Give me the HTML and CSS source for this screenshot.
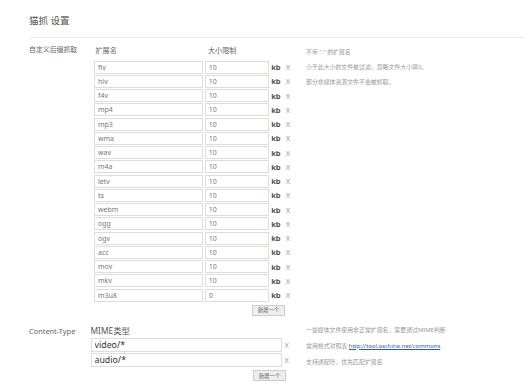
FILE: index.html
```
<html>
  <head>
    <meta charset="UTF-8">
    <title>猫抓 设置</title>
    <link rel="stylesheet" href="styles.css">
  </head>
  <body>
    <div class="page">
      <h1 class="title">猫抓 设置</h1>

      <div class="group ext-group">
        <div class="label">自定义后缀抓取</div>
        <div class="editor">
          <div class="head"><span class="col-ext">扩展名</span><span class="col-size">大小限制</span></div>
          <div class="row"><input class="ext" value="flv"><input class="size" value="10"><span class="unit">kb</span><span class="del">X</span></div>
          <div class="row"><input class="ext" value="hlv"><input class="size" value="10"><span class="unit">kb</span><span class="del">X</span></div>
          <div class="row"><input class="ext" value="f4v"><input class="size" value="10"><span class="unit">kb</span><span class="del">X</span></div>
          <div class="row"><input class="ext" value="mp4"><input class="size" value="10"><span class="unit">kb</span><span class="del">X</span></div>
          <div class="row"><input class="ext" value="mp3"><input class="size" value="10"><span class="unit">kb</span><span class="del">X</span></div>
          <div class="row"><input class="ext" value="wma"><input class="size" value="10"><span class="unit">kb</span><span class="del">X</span></div>
          <div class="row"><input class="ext" value="wav"><input class="size" value="10"><span class="unit">kb</span><span class="del">X</span></div>
          <div class="row"><input class="ext" value="m4a"><input class="size" value="10"><span class="unit">kb</span><span class="del">X</span></div>
          <div class="row"><input class="ext" value="letv"><input class="size" value="10"><span class="unit">kb</span><span class="del">X</span></div>
          <div class="row"><input class="ext" value="ts"><input class="size" value="10"><span class="unit">kb</span><span class="del">X</span></div>
          <div class="row"><input class="ext" value="webm"><input class="size" value="10"><span class="unit">kb</span><span class="del">X</span></div>
          <div class="row"><input class="ext" value="ogg"><input class="size" value="10"><span class="unit">kb</span><span class="del">X</span></div>
          <div class="row"><input class="ext" value="ogv"><input class="size" value="10"><span class="unit">kb</span><span class="del">X</span></div>
          <div class="row"><input class="ext" value="acc"><input class="size" value="10"><span class="unit">kb</span><span class="del">X</span></div>
          <div class="row"><input class="ext" value="mov"><input class="size" value="10"><span class="unit">kb</span><span class="del">X</span></div>
          <div class="row"><input class="ext" value="mkv"><input class="size" value="10"><span class="unit">kb</span><span class="del">X</span></div>
          <div class="row"><input class="ext" value="m3u8"><input class="size" value="0"><span class="unit">kb</span><span class="del">X</span></div>
          <div class="actions"><button class="add-btn">新增一个</button></div>
        </div>
        <div class="notes">
          <p>不带 "." 的扩展名</p>
          <p>小于此大小的文件被过滤，忽略文件大小填0。</p>
          <p>部分非媒体资源文件不会被抓取。</p>
        </div>
      </div>

      <div class="group mime-group">
        <div class="label">Content-Type</div>
        <div class="editor">
          <div class="head">MIME类型</div>
          <div class="row"><input class="mime" value="video/*"><span class="del">X</span></div>
          <div class="row"><input class="mime" value="audio/*"><span class="del">X</span></div>
          <div class="actions"><button class="add-btn">新增一个</button></div>
        </div>
        <div class="notes">
          <p>一些媒体文件使用非正常扩展名，需要通过MIME判断</p>
          <p>常用格式对照表 <a href="#">http://tool.oschina.net/commons</a></p>
          <p>支持通配符，优先匹配扩展名</p>
        </div>
      </div>
    </div>
  </body>
</html>
```

FILE: styles.css
```
body {
  margin: 0;
  background: #fff;
  color: #666;
  font-family: "Noto Sans", "Noto Sans CJK SC", sans-serif;
}

.page {
  padding-left: 29px;
}

.title {
  margin: 0;
  padding-top: 14px;
  height: 23px;
  line-height: 14px;
  font-size: 9.5px;
  font-weight: normal;
  color: #555;
  border-bottom: 1px solid #eee;
}

.group {
  display: grid;
  grid-template-columns: 65px 196px 1fr;
}

.ext-group {
  margin-top: 7px;
}

.mime-group {
  margin-top: 10.5px;
  grid-template-columns: 61.5px 199.5px 1fr;
}

.label {
  font-size: 6.9px;
  line-height: 10px;
  color: #666;
}

.mime-group .label {
  font-size: 7.4px;
}

.head {
  height: 10px;
  line-height: 10px;
  margin-bottom: 5.5px;
  font-size: 7.1px;
  color: #666;
  display: flex;
}

.mime-group .head {
  font-size: 8.4px;
  margin-bottom: 1.5px;
  color: #555;
}

.col-ext {
  width: 112.5px;
  padding-left: 1.5px;
}

.row {
  display: flex;
  align-items: center;
  height: 13px;
  margin-bottom: 1.25px;
}

.row input {
  box-sizing: border-box;
  height: 13px;
  margin: 0;
  padding: 0 3px;
  border: 1px solid #ddd;
  background: #fff;
  font-family: "Noto Sans", sans-serif;
  font-size: 7px;
  color: #777;
  outline: none;
}

.ext {
  width: 111px;
}

.size {
  width: 64px;
  margin-left: 2px !important;
}

.unit {
  margin-left: 2.5px;
  font-size: 7.6px;
  font-weight: bold;
  color: #555;
}

.del {
  margin-left: 5px;
  font-size: 7.4px;
  color: #999;
}

.mime-group .row {
  height: 14px;
  margin-bottom: 1px;
}

.mime {
  width: 191px;
  height: 14px !important;
  font-size: 8.8px !important;
  color: #333 !important;
}

.mime-group .del {
  margin-left: 3px;
}

.actions {
  display: flex;
  justify-content: flex-end;
  padding-right: 5px;
  margin-top: 3.3px;
}

.mime-group .actions {
  margin-top: 3.5px;
  padding-right: 4px;
}

.add-btn {
  box-sizing: border-box;
  width: 33px;
  height: 11px;
  padding: 0;
  border: 1px solid #ccc;
  background: #eee;
  font-family: "Noto Sans CJK SC", sans-serif;
  font-size: 5.4px;
  color: #555;
}

.notes {
  padding-left: 16px;
}

.notes p {
  margin: 0;
  line-height: 15px;
  font-size: 5.9px;
  color: #999;
}

.mime-group .notes {
  margin-top: -4.5px;
}

.mime-group .notes p {
  line-height: 16px;
}

.notes a {
  color: #2a5db0;
}
```
